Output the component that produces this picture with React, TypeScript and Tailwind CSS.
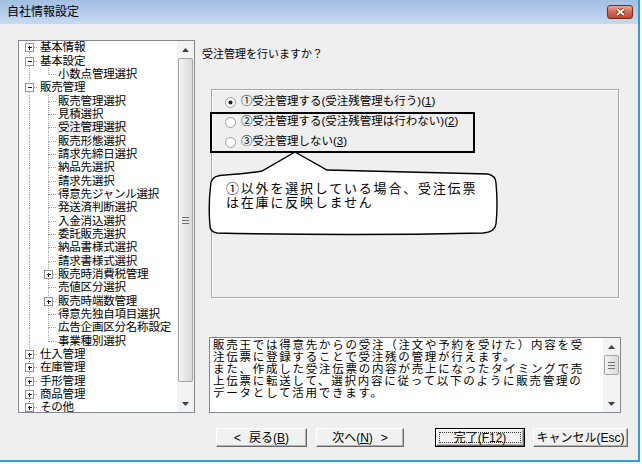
import type { ReactNode } from "react";

type Row = { t: string; lv: 0 | 1; box?: "+" | "-"; sel?: boolean };

const rows: Row[] = [
  { t: "基本情報", lv: 0, box: "+" },
  { t: "基本設定", lv: 0, box: "-" },
  { t: "小数点管理選択", lv: 1 },
  { t: "販売管理", lv: 0, box: "-" },
  { t: "販売管理選択", lv: 1 },
  { t: "見積選択", lv: 1 },
  { t: "受注管理選択", lv: 1, sel: true },
  { t: "販売形態選択", lv: 1 },
  { t: "請求先締日選択", lv: 1 },
  { t: "納品先選択", lv: 1 },
  { t: "請求先選択", lv: 1 },
  { t: "得意先ジャンル選択", lv: 1 },
  { t: "発送済判断選択", lv: 1 },
  { t: "入金消込選択", lv: 1 },
  { t: "委託販売選択", lv: 1 },
  { t: "納品書様式選択", lv: 1 },
  { t: "請求書様式選択", lv: 1 },
  { t: "販売時消費税管理", lv: 1, box: "+" },
  { t: "売値区分選択", lv: 1 },
  { t: "販売時端数管理", lv: 1, box: "+" },
  { t: "得意先独自項目選択", lv: 1 },
  { t: "広告企画区分名称設定", lv: 1 },
  { t: "事業種別選択", lv: 1 },
  { t: "仕入管理", lv: 0, box: "+" },
  { t: "在庫管理", lv: 0, box: "+" },
  { t: "手形管理", lv: 0, box: "+" },
  { t: "商品管理", lv: 0, box: "+" },
  { t: "その他", lv: 0, box: "+" },
];

const desc = [
  "販売王では得意先からの受注（注文や予約を受けた）内容を受",
  "注伝票に登録することで受注残の管理が行えます。",
  "また、作成した受注伝票の内容が売上になったタイミングで売",
  "上伝票に転送して、選択内容に従って以下のように販売管理の",
  "データとして活用できます。",
];

const LINE = "#a3a3a3";

function Cell({ up, down, right, box }: { up?: boolean; down?: boolean; right?: boolean; box?: "+" | "-" }) {
  return (
    <svg width="19" height="13" className="shrink-0" shapeRendering="crispEdges">
      {up && <line x1="10.5" y1="0" x2="10.5" y2="6.5" stroke={LINE} strokeDasharray="1 1" />}
      {down && <line x1="10.5" y1="6.5" x2="10.5" y2="13" stroke={LINE} strokeDasharray="1 1" />}
      {right && <line x1="10.5" y1="6.5" x2="19" y2="6.5" stroke={LINE} strokeDasharray="1 1" />}
      {box && (
        <g>
          <rect x="6.5" y="2.5" width="8" height="8" fill="#fff" stroke="#949494" />
          <line x1="8.5" y1="6.5" x2="13" y2="6.5" stroke="#1d1d1d" />
          {box === "+" && <line x1="10.5" y1="4.5" x2="10.5" y2="9" stroke="#1d1d1d" />}
        </g>
      )}
    </svg>
  );
}

function Arrow({ up }: { up?: boolean }) {
  return (
    <div className="h-[17px] shrink-0 flex items-center justify-center">
      <svg width="7" height="4" viewBox="0 0 7 4">
        <path d={up ? "M0 4 L3.5 0 L7 4 Z" : "M0 0 L3.5 4 L7 0 Z"} fill="#404040" />
      </svg>
    </div>
  );
}

function Grip() {
  return (
    <div className="flex flex-col gap-[2px] items-center">
      <div className="w-[7px] h-px bg-[#6f6f6f]" />
      <div className="w-[7px] h-px bg-[#6f6f6f]" />
      <div className="w-[7px] h-px bg-[#6f6f6f]" />
    </div>
  );
}

function TreePanel() {
  return (
    <div className="ml-[18px] mt-[16px] w-[177px] h-[373px] shrink-0 border border-[#828790] bg-white flex">
      <div className="flex-1 overflow-hidden text-[11.5px] tracking-[-0.2px]">
        {rows.map((r, i) => {
          const next = rows[i + 1];
          if (r.lv === 0) {
            return (
              <div key={r.t} className="h-[13.35px] flex items-center">
                <Cell up={i > 0} down={r.t !== "その他"} right box={r.box} />
                <span className="pl-[2px] leading-[13px] whitespace-nowrap">{r.t}</span>
              </div>
            );
          }
          return (
            <div key={r.t} className="h-[13.35px] flex items-center">
              <Cell up down />
              <Cell up down={!!next && next.lv === 1} right box={r.box} />
              <span className={`pl-[1px] pr-[1px] leading-[13px] whitespace-nowrap ${r.sel ? "bg-[#ececec]" : ""}`}>{r.t}</span>
            </div>
          );
        })}
      </div>
      <div className="w-[17px] shrink-0 bg-[#f3f3f3] flex flex-col">
        <Arrow up />
        <div className="h-[324px] mx-[1px] rounded-[2px] border border-[#a4a4a4] bg-gradient-to-r from-[#f4f4f4] to-[#d9d9d9] flex items-center justify-center">
          <Grip />
        </div>
        <div className="flex-1" />
        <Arrow />
      </div>
    </div>
  );
}

function Radio({ on }: { on?: boolean }) {
  return (
    <svg width="11" height="11" viewBox="0 0 11 11" className="shrink-0">
      <circle cx="5.5" cy="5.5" r="5" fill="#fff" stroke="#9a9a9a" />
      {on && <circle cx="5.5" cy="5.5" r="2" fill="#1e1e1e" />}
    </svg>
  );
}

function Opt({ on, label, k }: { on?: boolean; label: string; k: string }) {
  return (
    <div className="h-[20px] flex items-center pl-[13px] gap-[5px] text-[11.5px]">
      <Radio on={on} />
      <span className="whitespace-nowrap">
        {label}(<span className="underline underline-offset-1">{k}</span>)
      </span>
    </div>
  );
}

function Btn({ cls, def, children }: { cls: string; def?: boolean; children: ReactNode }) {
  const face = "h-full w-full flex items-center justify-center bg-[#f1f1f1] border border-t-white border-l-white border-r-[#6a6a6a] border-b-[#6a6a6a] shadow-[inset_-1px_-1px_0_#b0b0b0] text-[12px] leading-none whitespace-nowrap";
  if (def) {
    return (
      <div className={`h-[19px] shrink-0 border border-black ${cls}`}>
        <div className={`${face} p-[2px]`}>
          <div className="w-full h-full border border-dotted border-[#333] flex items-center justify-center">{children}</div>
        </div>
      </div>
    );
  }
  return (
    <div className={`h-[19px] shrink-0 ${cls}`}>
      <div className={face}>{children}</div>
    </div>
  );
}

function RightPanel() {
  return (
    <div className="ml-[7px] flex flex-col">
      <div className="mt-[24px] h-[13px] leading-[13px] text-[11px]">受注管理を行いますか？</div>
      <div className="ml-[9px] mt-[28px] w-[408px] h-[209px] border border-[#a6a6a6] shadow-[inset_1px_1px_0_#fff,1px_1px_0_#fff] pt-[2px]">
        <Opt on label="①受注管理する(受注残管理も行う)" k="1" />
        <Opt label="②受注管理する(受注残管理は行わない)" k="2" />
        <Opt label="③受注管理しない" k="3" />
      </div>
      <div className="ml-[7px] mt-[39px] w-[412px] h-[76px] border border-[#828790] bg-white flex">
        <div className="flex-1 pl-[3px] pt-[1px] text-[11.5px] leading-[12px] tracking-[1.75px] whitespace-nowrap overflow-hidden">
          {desc.map((l) => (
            <div key={l}>{l}</div>
          ))}
        </div>
        <div className="w-[17px] shrink-0 bg-[#f3f3f3] flex flex-col">
          <Arrow up />
          <div className="h-[20px] mx-[1px] rounded-[2px] border border-[#a4a4a4] bg-gradient-to-r from-[#f4f4f4] to-[#d9d9d9] flex items-center justify-center">
            <Grip />
          </div>
          <div className="flex-1" />
          <Arrow />
        </div>
      </div>
      <div className="ml-[14px] mt-[15px] flex">
        <Btn cls="w-[91px]">
          <span className="mr-[8px]">&lt;</span>戻る(<span className="underline">B</span>)
        </Btn>
        <Btn cls="w-[88px] ml-[9px]">
          次へ(<span className="underline">N</span>)<span className="ml-[8px]">&gt;</span>
        </Btn>
        <Btn cls="w-[90px] ml-[31px]" def>
          完了(F12)
        </Btn>
        <Btn cls="w-[95px] ml-[8px]">キャンセル(Esc)</Btn>
      </div>
    </div>
  );
}

function CloseBtn() {
  return (
    <div className="w-[26px] h-[14px] rounded-[3px] border border-[#6e2c22] bg-gradient-to-b from-[#eba696] via-[#d5664f] to-[#c04630] flex items-center justify-center">
      <svg width="11" height="8" viewBox="0 0 11 8">
        <path d="M2 1 L9 7 M9 1 L2 7" stroke="#5a1f17" strokeWidth="3.2" />
        <path d="M2 1 L9 7 M9 1 L2 7" stroke="#fff" strokeWidth="1.7" />
      </svg>
    </div>
  );
}

export default function App() {
  return (
    <div className="w-[642px] h-[464px] bg-[#f6f6f6] font-['Liberation_Sans','Noto_Sans_CJK_JP',sans-serif] text-black">
      <div className="relative w-[640px] h-[462px] border-r-2 border-b-2 border-[#2f9be0] bg-[#efefef] flex flex-col overflow-hidden">
        <div className="h-[24px] shrink-0 flex items-center justify-between pl-[7px] pr-[5px] bg-gradient-to-b from-[#a2bee3] to-[#c7daf0]">
          <span className="text-[12px] leading-none">自社情報設定</span>
          <CloseBtn />
        </div>
        <div className="flex flex-1">
          <TreePanel />
          <RightPanel />
        </div>

        <div className="absolute left-[210px] top-[112px] w-[265px] h-[41px] border-2 border-black" />
        <div className="absolute left-[205px] top-[150px] w-[296px] h-[88px]">
          <svg className="absolute inset-0" width="296" height="88">
            <path
              d="M6 32 Q8 25 20 25 Q40 24 57 21 L90 2 L122 20 Q200 22 283 24 Q291 26 291 33 Q293 55 291 74 Q290 82 278 83 Q145 86 12 83 Q5 82 5 76 Q3 55 6 32 Z"
              fill="#fff"
              stroke="#000"
              strokeWidth="1.4"
            />
          </svg>
          <div className="relative pl-[21px] pt-[32px] text-[13px] leading-[14px] tracking-[1.8px] whitespace-nowrap">
            <div>①以外を選択している場合、受注伝票</div>
            <div>は在庫に反映しません</div>
          </div>
        </div>
      </div>
    </div>
  );
}
